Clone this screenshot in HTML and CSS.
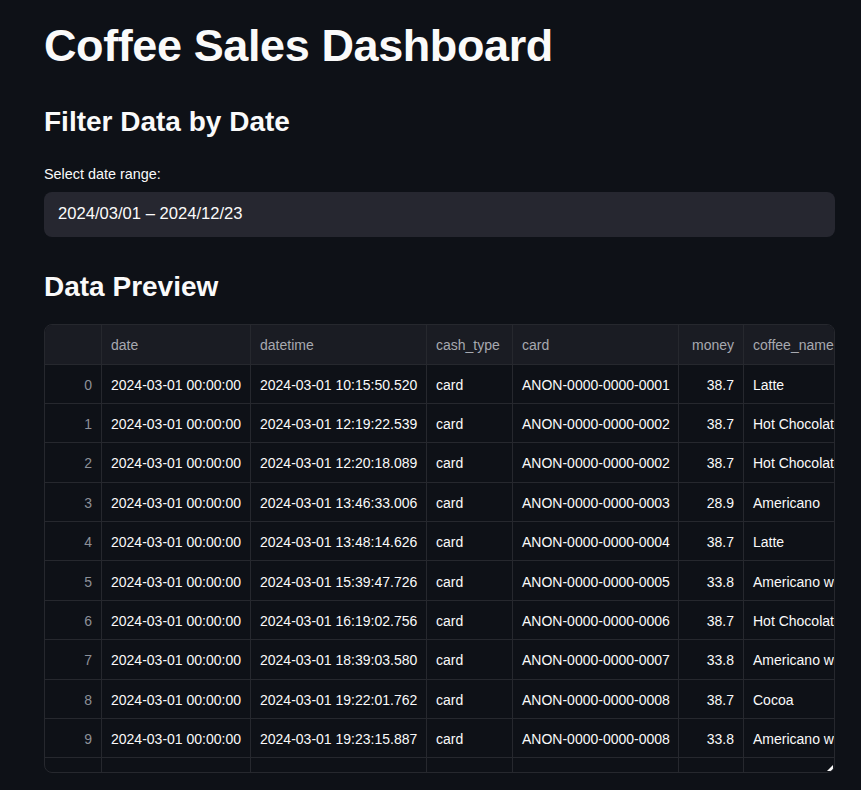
FILE: index.html
```html
<!DOCTYPE html>
<html lang="en">
<head>
<meta charset="utf-8">
<title>Coffee Sales Dashboard</title>
<link rel="stylesheet" href="styles.css">
</head>
<body>
<main class="app">
  <h1 class="title">Coffee Sales Dashboard</h1>
  <h3 class="subheader sub-filter">Filter Data by Date</h3>
  <label class="field-label">Select date range:</label>
  <div class="date-input">2024/03/01 – 2024/12/23</div>
  <h3 class="subheader sub-preview">Data Preview</h3>
  <div class="grid-frame">
    <table class="grid">
      <colgroup>
        <col class="c-idx"><col class="c-date"><col class="c-dt"><col class="c-cash"><col class="c-card"><col class="c-money"><col class="c-name">
      </colgroup>
      <thead>
        <tr>
          <th></th><th>date</th><th>datetime</th><th>cash_type</th><th>card</th><th class="num">money</th><th>coffee_name</th>
        </tr>
      </thead>
      <tbody>
        <tr><td class="idx">0</td><td>2024-03-01 00:00:00</td><td>2024-03-01 10:15:50.520</td><td>card</td><td>ANON-0000-0000-0001</td><td class="num">38.7</td><td>Latte</td></tr>
        <tr><td class="idx">1</td><td>2024-03-01 00:00:00</td><td>2024-03-01 12:19:22.539</td><td>card</td><td>ANON-0000-0000-0002</td><td class="num">38.7</td><td>Hot Chocolate</td></tr>
        <tr><td class="idx">2</td><td>2024-03-01 00:00:00</td><td>2024-03-01 12:20:18.089</td><td>card</td><td>ANON-0000-0000-0002</td><td class="num">38.7</td><td>Hot Chocolate</td></tr>
        <tr><td class="idx">3</td><td>2024-03-01 00:00:00</td><td>2024-03-01 13:46:33.006</td><td>card</td><td>ANON-0000-0000-0003</td><td class="num">28.9</td><td>Americano</td></tr>
        <tr><td class="idx">4</td><td>2024-03-01 00:00:00</td><td>2024-03-01 13:48:14.626</td><td>card</td><td>ANON-0000-0000-0004</td><td class="num">38.7</td><td>Latte</td></tr>
        <tr><td class="idx">5</td><td>2024-03-01 00:00:00</td><td>2024-03-01 15:39:47.726</td><td>card</td><td>ANON-0000-0000-0005</td><td class="num">33.8</td><td>Americano with Milk</td></tr>
        <tr><td class="idx">6</td><td>2024-03-01 00:00:00</td><td>2024-03-01 16:19:02.756</td><td>card</td><td>ANON-0000-0000-0006</td><td class="num">38.7</td><td>Hot Chocolate</td></tr>
        <tr><td class="idx">7</td><td>2024-03-01 00:00:00</td><td>2024-03-01 18:39:03.580</td><td>card</td><td>ANON-0000-0000-0007</td><td class="num">33.8</td><td>Americano with Milk</td></tr>
        <tr><td class="idx">8</td><td>2024-03-01 00:00:00</td><td>2024-03-01 19:22:01.762</td><td>card</td><td>ANON-0000-0000-0008</td><td class="num">38.7</td><td>Cocoa</td></tr>
        <tr><td class="idx">9</td><td>2024-03-01 00:00:00</td><td>2024-03-01 19:23:15.887</td><td>card</td><td>ANON-0000-0000-0008</td><td class="num">33.8</td><td>Americano with Milk</td></tr>
        <tr><td class="idx">10</td><td>2024-03-02 00:00:00</td><td>2024-03-02 10:22:06.285</td><td>card</td><td>ANON-0000-0000-0009</td><td class="num">38.7</td><td>Americano with Milk</td></tr>
      </tbody>
    </table>
    <span class="resize-handle"></span>
  </div>
</main>
</body>
</html>
```

FILE: styles.css
```css
html, body {
  margin: 0;
  padding: 0;
  background: #0e1117;
}

body {
  font-family: "Liberation Sans", Arial, sans-serif;
  color: #fafafa;
}

.app {
  box-sizing: border-box;
  width: 835px;
  padding: 19px 0 0 44px;
  display: flex;
  flex-direction: column;
}

.title {
  margin: 0;
  font-size: 45px;
  line-height: 54px;
  font-weight: 700;
  letter-spacing: -0.4px;
  color: #fafafa;
}

.subheader {
  margin: 0;
  font-size: 28px;
  line-height: 36px;
  font-weight: 700;
  color: #fafafa;
}

.sub-filter {
  margin-top: 31px;
}

.field-label {
  margin-top: 24px;
  font-size: 14.4px;
  line-height: 20px;
  color: #fafafa;
}

.date-input {
  margin-top: 7.5px;
  height: 45px;
  box-sizing: border-box;
  padding: 0 14px;
  display: flex;
  align-items: center;
  background: #262730;
  border-radius: 8px;
  font-size: 16.6px;
  color: #fafafa;
}

.sub-preview {
  margin-top: 32px;
}

.grid-frame {
  position: relative;
  margin-top: 19px;
  width: 791px;
  height: 449px;
  box-sizing: border-box;
  border: 1px solid #26282e;
  border-radius: 8px;
  overflow: hidden;
}

.grid {
  table-layout: fixed;
  border-collapse: separate;
  border-spacing: 0;
  width: 869px;
  font-size: 14px;
}

.c-idx { width: 57px; }
.c-date { width: 149px; }
.c-dt { width: 176px; }
.c-cash { width: 86px; }
.c-card { width: 166px; }
.c-money { width: 65px; }
.c-name { width: 170px; }

.grid th,
.grid td {
  box-sizing: border-box;
  padding: 2px 9px 0 9px;
  border-right: 1px solid #26282e;
  border-bottom: 1px solid #26282e;
  white-space: nowrap;
  overflow: hidden;
  text-align: left;
  vertical-align: middle;
  font-weight: 400;
}

.grid thead tr {
  height: 40px;
}

.grid th {
  background: #1a1c23;
  color: #a7a9b0;
}

.grid tbody tr {
  height: 39.4px;
}

.grid td {
  color: #fafafa;
}

.grid td.idx {
  text-align: right;
  color: #8d9098;
}

.grid .num {
  text-align: right;
}

.resize-handle {
  position: absolute;
  right: 1px;
  bottom: 1px;
  width: 0;
  height: 0;
  border-left: 6px solid transparent;
  border-bottom: 6px solid #fafafa;
}
```
